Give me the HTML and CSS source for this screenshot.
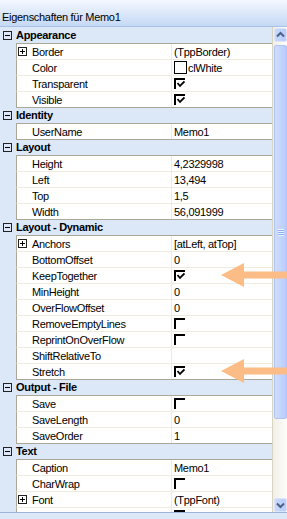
FILE: index.html
```html
<!DOCTYPE html>
<html lang="de">
<head>
  <meta charset="UTF-8" />
  <title>Eigenschaften</title>
  <link rel="stylesheet" href="styles.css">
</head>
<body>
  <div class="panel">
    <div class="title">Eigenschaften für Memo1</div>
    <div class="body">
      <div class="grid">
        <div class="cat"><span class="box"></span>Appearance</div>
        <div class="row"><div class="name exp"><span class="box plus"></span>Border</div><div class="val">(TppBorder)</div></div>
        <div class="row"><div class="name">Color</div><div class="val"><span class="sw"></span>clWhite</div></div>
        <div class="row"><div class="name">Transparent</div><div class="val"><span class="cb"><svg viewBox="0 0 9 9" width="9" height="9"><path d="M1.5 3 L4 6 L8.5 1.5" fill="none" stroke="#000" stroke-width="1.8"/></svg></span></div></div>
        <div class="row"><div class="name">Visible</div><div class="val"><span class="cb"><svg viewBox="0 0 9 9" width="9" height="9"><path d="M1.5 3 L4 6 L8.5 1.5" fill="none" stroke="#000" stroke-width="1.8"/></svg></span></div></div>

        <div class="cat"><span class="box"></span>Identity</div>
        <div class="row"><div class="name">UserName</div><div class="val">Memo1</div></div>

        <div class="cat"><span class="box"></span>Layout</div>
        <div class="row"><div class="name">Height</div><div class="val">4,2329998</div></div>
        <div class="row"><div class="name">Left</div><div class="val">13,494</div></div>
        <div class="row"><div class="name">Top</div><div class="val">1,5</div></div>
        <div class="row"><div class="name">Width</div><div class="val">56,091999</div></div>

        <div class="cat"><span class="box"></span>Layout - Dynamic</div>
        <div class="row"><div class="name exp"><span class="box plus"></span>Anchors</div><div class="val">[atLeft, atTop]</div></div>
        <div class="row"><div class="name">BottomOffset</div><div class="val">0</div></div>
        <div class="row"><div class="name">KeepTogether</div><div class="val"><span class="cb"><svg viewBox="0 0 9 9" width="9" height="9"><path d="M1.5 3 L4 6 L8.5 1.5" fill="none" stroke="#000" stroke-width="1.8"/></svg></span></div></div>
        <div class="row"><div class="name">MinHeight</div><div class="val">0</div></div>
        <div class="row"><div class="name">OverFlowOffset</div><div class="val">0</div></div>
        <div class="row"><div class="name">RemoveEmptyLines</div><div class="val"><span class="cb"></span></div></div>
        <div class="row"><div class="name">ReprintOnOverFlow</div><div class="val"><span class="cb"></span></div></div>
        <div class="row"><div class="name">ShiftRelativeTo</div><div class="val"></div></div>
        <div class="row"><div class="name">Stretch</div><div class="val"><span class="cb"><svg viewBox="0 0 9 9" width="9" height="9"><path d="M1.5 3 L4 6 L8.5 1.5" fill="none" stroke="#000" stroke-width="1.8"/></svg></span></div></div>

        <div class="cat"><span class="box"></span>Output - File</div>
        <div class="row"><div class="name">Save</div><div class="val"><span class="cb"></span></div></div>
        <div class="row"><div class="name">SaveLength</div><div class="val">0</div></div>
        <div class="row"><div class="name">SaveOrder</div><div class="val">1</div></div>

        <div class="cat"><span class="box"></span>Text</div>
        <div class="row"><div class="name">Caption</div><div class="val">Memo1</div></div>
        <div class="row"><div class="name">CharWrap</div><div class="val"><span class="cb"></span></div></div>
        <div class="row"><div class="name exp"><span class="box plus"></span>Font</div><div class="val">(TppFont)</div></div>
        <div class="row"><div class="name">ForceJustifyLastLine</div><div class="val"><span class="cb"></span></div></div>
      </div>

      <div class="scroll">
        <div class="btn"><svg viewBox="0 0 13 14" width="13" height="14"><path d="M3 8.5 L6.5 5 L10 8.5" fill="none" stroke="#4d6185" stroke-width="2"/></svg></div>
        <div class="thumb"><span class="grip"></span></div>
        <div class="track"></div>
        <div class="btn"><svg viewBox="0 0 13 14" width="13" height="14"><path d="M3 5.5 L6.5 9 L10 5.5" fill="none" stroke="#4d6185" stroke-width="2"/></svg></div>
      </div>
    </div>
    <div class="foot"></div>

    <svg class="arrows" width="287" height="519" viewBox="0 0 287 519">
      <polygon points="221,275 244,263 244,271.5 287,271.5 287,278.5 244,278.5 244,287" />
      <polygon points="221,371 244,359 244,367.5 287,367.5 287,374.5 244,374.5 244,383" />
    </svg>
  </div>
</body>
</html>
```

FILE: styles.css
```css
* { margin: 0; padding: 0; box-sizing: border-box; }

body {
  width: 287px;
  height: 519px;
  overflow: hidden;
  background: #fff;
  color: #000;
  font-family: "Liberation Sans", Arial, sans-serif;
  font-size: 11px;
  letter-spacing: -0.3px;
}

.panel {
  position: relative;
  height: 519px;
  display: flex;
  flex-direction: column;
}

.title {
  height: 27px;
  padding: 11px 0 0 2px;
  line-height: 13px;
  background: linear-gradient(#f4f8fe, #c5d8f5);
  border-bottom: 1px solid #a9c0e6;
}

.body {
  display: flex;
  height: 485px;
}

.grid {
  width: 273px;
  overflow: hidden;
  background: #dce7f8;
  border-right: 1px solid #d8d4c4;
}

/* category header */
.cat {
  height: 16px;
  display: flex;
  align-items: center;
  padding-left: 3px;
  font-weight: bold;
  background: linear-gradient(#aca899, #aca899) 16px 0 / 100% 1px no-repeat, #dce7f8;
}

.cat:first-child {
  background: #dce7f8;
}

.row {
  height: 16px;
  margin-left: 16px;
  display: flex;
  background: #fff;
  border-left: 1px solid #aca899;
  border-top: 1px solid #f0ecdc;
}

.cat + .row {
  border-top-color: #aca899;
}

.name {
  width: 155px;
  padding-left: 15px;
  display: flex;
  align-items: center;
  border-right: 1px solid #f0ecdc;
  white-space: nowrap;
}

.name.exp {
  padding-left: 1px;
}

.name.exp .box {
  margin-right: 5px;
}

.val {
  flex: 1;
  padding-left: 2px;
  display: flex;
  align-items: center;
  white-space: nowrap;
}

/* expand / collapse boxes */
.box {
  flex: none;
  width: 9px;
  height: 9px;
  margin-right: 4px;
  border: 1px solid #222;
  background: linear-gradient(#000, #000) center / 5px 1px no-repeat;
}

.box.plus {
  background:
    linear-gradient(#000, #000) center / 5px 1px no-repeat,
    linear-gradient(#000, #000) center / 1px 5px no-repeat;
}

/* checkboxes */
.cb {
  flex: none;
  display: flex;
  width: 11px;
  height: 11px;
  border-top: 2px solid #000;
  border-left: 2px solid #000;
}

.sw {
  flex: none;
  width: 13px;
  height: 13px;
  margin-right: 1px;
  border: 1px solid #000;
  background: #fff;
}

/* scrollbar */
.scroll {
  width: 14px;
  display: flex;
  flex-direction: column;
  padding: 1px 0 0 1px;
  background: linear-gradient(to right, #f1efe6, #fdfdfa);
}

.btn {
  flex: none;
  width: 13px;
  height: 14px;
  border: 1px solid #dbe6fd;
  border-radius: 2px;
  background: linear-gradient(to right, #c9d8fc, #b9cdfa);
  display: flex;
}

.btn svg {
  margin: -1px;
}

.thumb {
  flex: none;
  width: 13px;
  height: 374px;
  margin-top: 3px;
  border: 1px solid #aec4f4;
  border-radius: 2px;
  background: linear-gradient(to right, #cfdcfd, #b9cdfa);
  display: flex;
  align-items: center;
  justify-content: center;
}

.grip {
  width: 6px;
  height: 7px;
  background: repeating-linear-gradient(#eef3fe 0 1px, #8eaef2 1px 2px);
}

.track {
  flex: 1;
}

.foot {
  height: 7px;
  border-top: 1px solid #9cb4dc;
  background: #dce7f8;
}

.arrows {
  position: absolute;
  top: 0;
  left: 0;
  pointer-events: none;
  fill: #fbbc85;
}
```
